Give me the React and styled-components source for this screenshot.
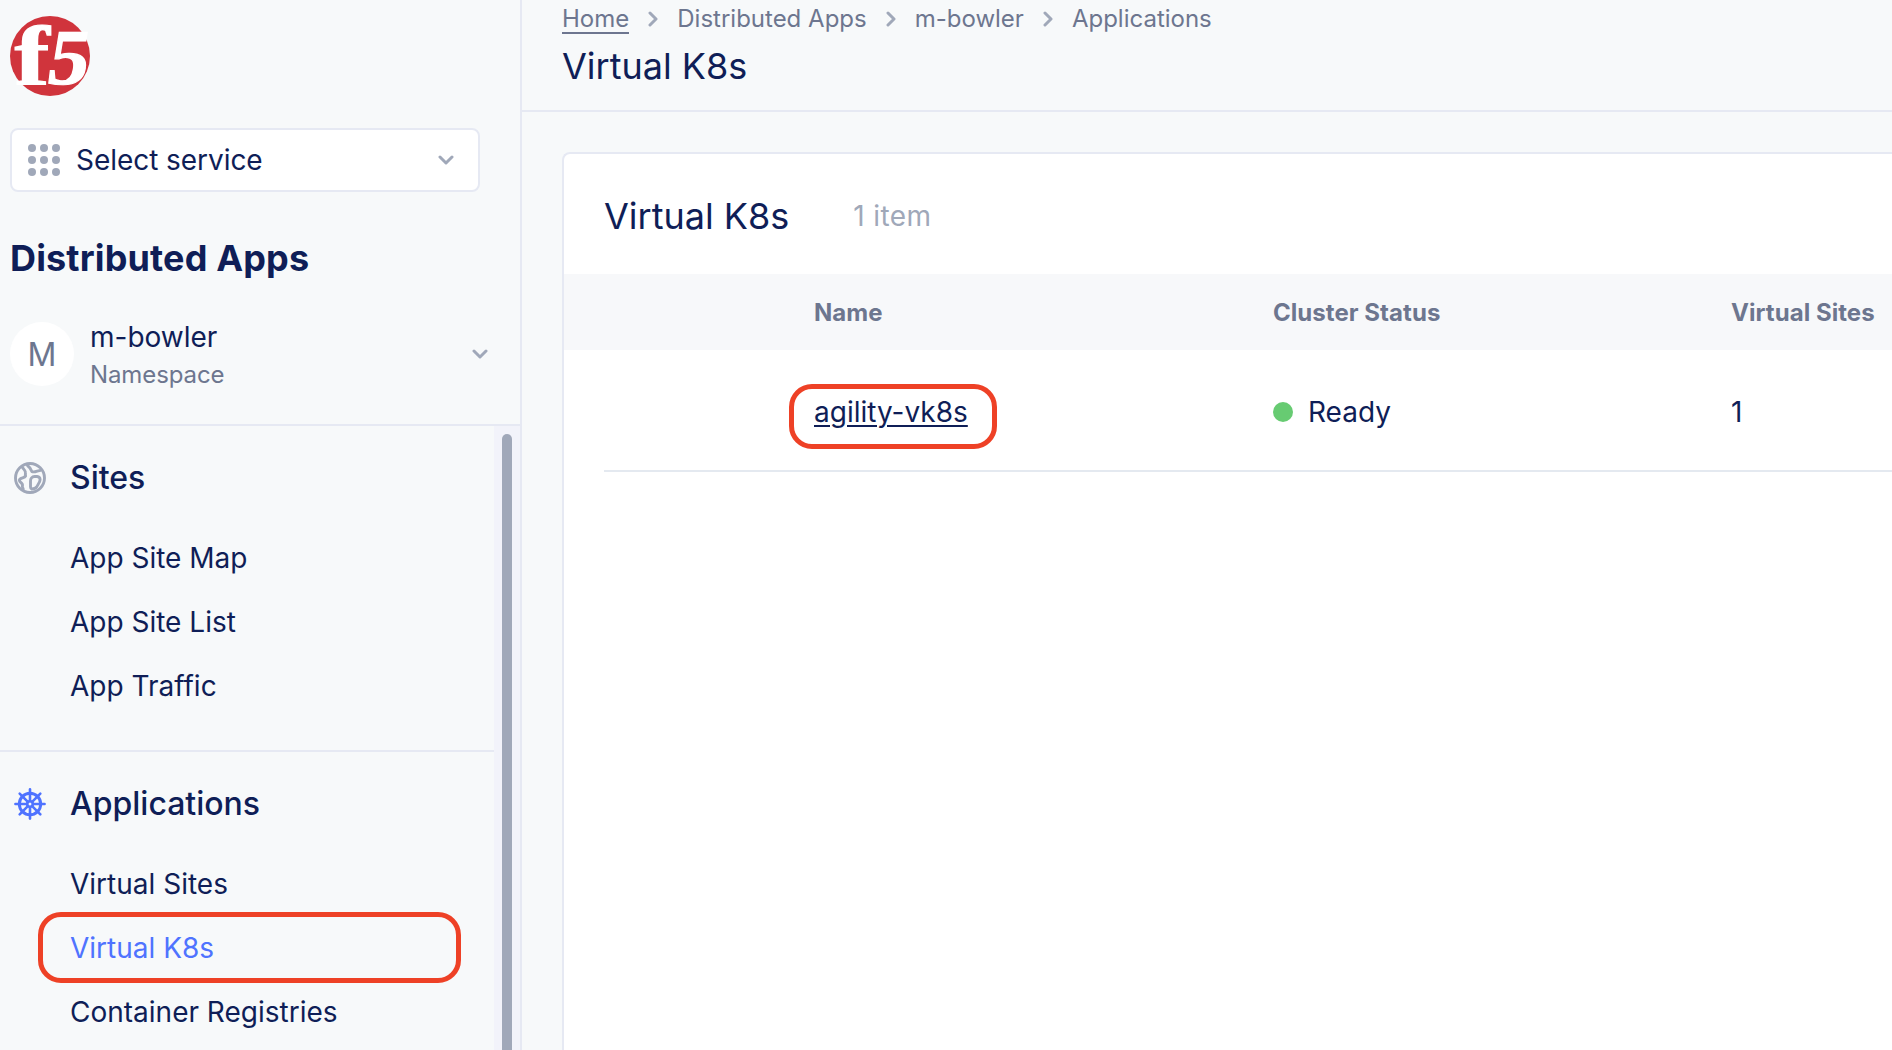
import React from "react";
import styled, { createGlobalStyle } from "styled-components";

const c = {
  bg: "#f7f9fa",
  navy: "#0f1e57",
  grey: "#6d768f",
  light: "#a0a8b9",
  line: "#e6e9f3",
  blue: "#4f73ff",
  red: "#ee4126",
  green: "#67cb72",
};

const Global = createGlobalStyle`
  *, *::before, *::after { box-sizing: border-box; }
  body { margin: 0; overflow: hidden; }
  ul { list-style: none; margin: 0; padding: 0; }
  h1, h2, h3 { margin: 0; }
`;

const Page = styled.div`
  display: flex;
  width: 100vw;
  height: 100vh;
  overflow: hidden;
  background: ${c.bg};
  color: ${c.navy};
  font-family: Inter, "Liberation Sans", sans-serif;
  font-size: 28px;
  white-space: nowrap;
`;

const Sidebar = styled.aside`
  flex: none;
  display: flex;
  flex-direction: column;
  width: 522px;
  border-right: 2px solid ${c.line};
`;

const SidebarTop = styled.div`
  flex: none;
  height: 426px;
  padding: 16px 10px 0;
  border-bottom: 2px solid ${c.line};
`;

const Logo = styled.svg`
  display: block;
  width: 80px;
  height: 80px;
  overflow: visible;
`;

const ServiceSelect = styled.div`
  display: flex;
  align-items: center;
  width: 470px;
  height: 64px;
  margin-top: 32px;
  padding: 0 24px 0 16px;
  border: 2px solid ${c.line};
  border-radius: 8px;
  background: #fff;
`;

const Dots = styled.span`
  display: grid;
  grid-template-columns: repeat(3, 8px);
  gap: 4px;
  margin-right: 16px;
`;

const Dot = styled.i`
  width: 8px;
  height: 8px;
  border-radius: 50%;
  background: ${c.light};
`;

const Grow = styled.span`
  flex: 1;
  letter-spacing: -0.05px;
`;

const Chevron = styled.svg`
  flex: none;
  width: ${(p) => (p.$right ? 10 : 16)}px;
  height: ${(p) => (p.$right ? 16 : 10)}px;
  fill: none;
  stroke: ${c.light};
  stroke-width: 3;
  stroke-linecap: round;
  stroke-linejoin: round;
`;

const AreaTitle = styled.h2`
  margin-top: 42px;
  font-size: 36px;
  font-weight: 700;
  line-height: 48px;
  letter-spacing: 0.15px;
`;

const Namespace = styled.div`
  display: flex;
  align-items: center;
  width: 478px;
  height: 76px;
  margin-top: 34px;
`;

const Avatar = styled.span`
  display: grid;
  place-items: center;
  width: 64px;
  height: 64px;
  margin-right: 16px;
  border-radius: 50%;
  background: #fff;
  color: ${c.grey};
  font-size: 32px;
`;

const NamespaceText = styled.div`
  flex: 1;
  padding-top: 3px;
  line-height: 38px;
`;

const NamespaceLabel = styled.div`
  color: ${c.grey};
  font-size: 24px;
  letter-spacing: -0.1px;
`;

const NavArea = styled.div`
  flex: 1;
  min-height: 0;
  display: flex;
  overflow: hidden;
`;

const Nav = styled.nav`
  flex: 1;
`;

const Track = styled.div`
  width: 26px;
  padding: 8px 8px 0;
  background: #f2f3fa;
`;

const Thumb = styled.div`
  height: 100%;
  border-radius: 5px 5px 0 0;
  background: ${c.light};
`;

const Section = styled.section`
  height: 326px;
  padding: 20px 0 0 14px;
  border-bottom: 2px solid ${c.line};
`;

const SectionHead = styled.h3`
  display: flex;
  align-items: center;
  gap: 24px;
  height: 64px;
  margin-bottom: 16px;
  font-size: 32px;
  font-weight: 500;
`;

const SectionName = styled.span`
  padding-bottom: 2px;
`;

const SectionIcon = styled.svg`
  width: 32px;
  height: 32px;
  fill: none;
  stroke: ${(p) => (p.$active ? c.blue : c.light)};
  stroke-linecap: round;
  stroke-linejoin: round;
`;

const NavItem = styled.li`
  position: relative;
  height: 64px;
  padding-left: 56px;
  line-height: 65px;
  color: ${(p) => (p.$active ? c.blue : c.navy)};
`;

const Marker = styled.span`
  position: absolute;
  border: 5px solid ${c.red};
  border-radius: 23px;
`;

const NavMarker = styled(Marker)`
  left: 24px;
  top: -4px;
  width: 423px;
  height: 71px;
`;

const LinkMarker = styled(Marker)`
  left: -25px;
  top: -11px;
  width: 208px;
  height: 65px;
`;

const Main = styled.main`
  flex: 1;
  min-width: 0;
  display: flex;
  flex-direction: column;
`;

const Header = styled.header`
  flex: none;
  height: 112px;
  padding-left: 40px;
  border-bottom: 2px solid ${c.line};
`;

const Crumbs = styled.div`
  display: flex;
  align-items: center;
  gap: 19px;
  height: 36px;
  padding-top: 1px;
  color: ${c.grey};
  font-size: 24px;
`;

const HomeLink = styled.a`
  padding-top: 2px;
  border-bottom: 2px solid ${c.grey};
  line-height: 26px;
`;

const PageTitle = styled.h1`
  margin-top: 12px;
  font-size: 36px;
  font-weight: 400;
  line-height: 36px;
`;

const Card = styled.section`
  flex: 1;
  margin: 40px 0 0 40px;
  border: solid ${c.line};
  border-width: 2px 0 0 2px;
  border-top-left-radius: 8px;
  background: #fff;
`;

const CardHead = styled.div`
  display: flex;
  align-items: center;
  gap: 64px;
  height: 120px;
  padding: 4px 0 0 40px;
`;

const CardTitle = styled.h2`
  font-size: 36px;
  font-weight: 400;
`;

const Count = styled.span`
  color: ${c.light};
  letter-spacing: 0.4px;
`;

const columns = `
  display: grid;
  grid-template-columns: 459px 458px 1fr;
  align-items: center;
`;

const TableHead = styled.div`
  ${columns}
  height: 76px;
  padding-left: 250px;
  background: #f7f8fa;
  color: ${c.grey};
  font-size: 24px;
  font-weight: 700;
  letter-spacing: 0.05px;
`;

const TableRow = styled.div`
  ${columns}
  height: 122px;
  margin-left: 40px;
  padding: 4px 0 0 210px;
  border-bottom: 2px solid #e4e9f0;
`;

const NameCell = styled.div`
  position: relative;
`;

const NameLink = styled.a`
  text-decoration: underline;
  text-decoration-thickness: 2px;
  text-underline-offset: 3px;
`;

const Status = styled.div`
  display: flex;
  align-items: center;
  gap: 15px;

  &::before {
    content: "";
    width: 20px;
    height: 20px;
    border-radius: 50%;
    background: ${c.green};
  }
`;

const Down = () => (
  <Chevron viewBox="0 0 16 10">
    <path d="M2 2l6 6 6-6" />
  </Chevron>
);

const Right = () => (
  <Chevron $right viewBox="0 0 10 16">
    <path d="M2 2l6 6-6 6" />
  </Chevron>
);

const Globe = () => (
  <SectionIcon viewBox="0 0 32 32" strokeWidth="2.9">
    <circle cx="16" cy="16" r="14.5" />
    <path d="M8.5 5.5c1 1.7 2.7 2.6 2.9 4.7.2 1.5-.3 2.6.2 3.8-1 2-3.4 1.6-5.5 3-1.2.8-.8 2.3.5 3.2 1.7 1.2 2.2 2.3 1.8 3.9-.2 1 .5 2 .8 3" />
    <path d="M13.5 3.5c2 1.5 3.4 3.3 4.5 6.2 1.8.6 3.6 0 5.2-.6l3.3-.8" />
    <path d="M20.5 14.5h2.6c1.6.2 3 1.6 3 3.2 0 2.4-2.3 5.1-3.4 7.2-1.3 2-3 2.1-4.9 2.1-1-.3-1.3-1-1.3-2v-6c0-2.5 1.5-4.5 4-4.5z" />
  </SectionIcon>
);

const Helm = () => (
  <SectionIcon $active viewBox="0 0 32 32" strokeWidth="2.6">
    <circle cx="16" cy="16" r="10.7" strokeWidth="3" />
    <circle cx="16" cy="16" r="2.8" />
    {[0, 45, 90, 135, 180, 225, 270, 315].map((a) => (
      <path key={a} d="M16 13V1.4" transform={`rotate(${a} 16 16)`} />
    ))}
  </SectionIcon>
);

const sections = [
  { title: "Sites", icon: <Globe />, items: ["App Site Map", "App Site List", "App Traffic"] },
  {
    title: "Applications",
    icon: <Helm />,
    items: ["Virtual Sites", "Virtual K8s", "Container Registries"],
    active: "Virtual K8s",
  },
];

export default function App() {
  return (
    <Page>
      <Global />
      <Sidebar>
        <SidebarTop>
          <Logo viewBox="0 0 80 80">
            <circle cx="40" cy="40" r="40" fill="#d0343c" />
            <g
              fill="#fff"
              stroke="#fff"
              strokeWidth="1.2"
              fontFamily="Liberation Serif"
              fontWeight="700"
            >
              <text fontSize="85" transform="translate(4.5 68.5) scale(1.24 1)">f</text>
              <text fontSize="79" transform="translate(35 67.5) scale(1.03 1) skewX(-9)">5</text>
            </g>
          </Logo>
          <ServiceSelect>
            <Dots>
              {Array.from({ length: 9 }, (_, i) => (
                <Dot key={i} />
              ))}
            </Dots>
            <Grow>Select service</Grow>
            <Down />
          </ServiceSelect>
          <AreaTitle>Distributed Apps</AreaTitle>
          <Namespace>
            <Avatar>M</Avatar>
            <NamespaceText>
              <div>m-bowler</div>
              <NamespaceLabel>Namespace</NamespaceLabel>
            </NamespaceText>
            <Down />
          </Namespace>
        </SidebarTop>
        <NavArea>
          <Nav>
            {sections.map((s) => (
              <Section key={s.title}>
                <SectionHead>
                  {s.icon}
                  <SectionName>{s.title}</SectionName>
                </SectionHead>
                <ul>
                  {s.items.map((t) => (
                    <NavItem key={t} $active={t === s.active}>
                      {t}
                      {t === s.active && <NavMarker />}
                    </NavItem>
                  ))}
                </ul>
              </Section>
            ))}
          </Nav>
          <Track>
            <Thumb />
          </Track>
        </NavArea>
      </Sidebar>
      <Main>
        <Header>
          <Crumbs>
            <HomeLink>Home</HomeLink>
            <Right />
            <span>Distributed Apps</span>
            <Right />
            <span>m-bowler</span>
            <Right />
            <span>Applications</span>
          </Crumbs>
          <PageTitle>Virtual K8s</PageTitle>
        </Header>
        <Card>
          <CardHead>
            <CardTitle>Virtual K8s</CardTitle>
            <Count>1 item</Count>
          </CardHead>
          <TableHead>
            <span>Name</span>
            <span>Cluster Status</span>
            <span>Virtual Sites</span>
          </TableHead>
          <TableRow>
            <NameCell>
              <NameLink>agility-vk8s</NameLink>
              <LinkMarker />
            </NameCell>
            <Status>Ready</Status>
            <span>1</span>
          </TableRow>
        </Card>
      </Main>
    </Page>
  );
}
